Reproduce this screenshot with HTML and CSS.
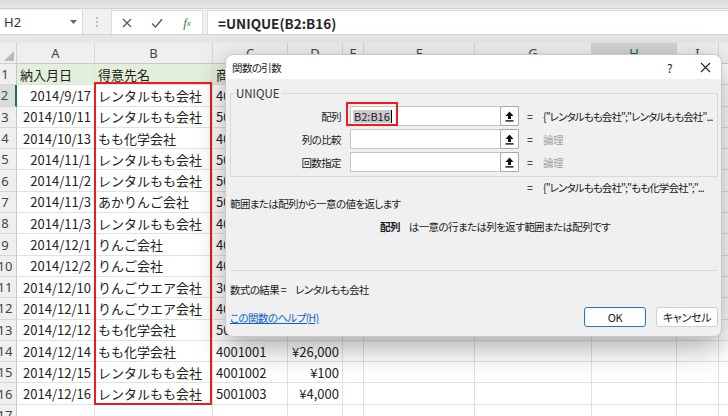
FILE: index.html
```html
<!DOCTYPE html>
<html lang="ja">
<head>
<meta charset="utf-8">
<link rel="stylesheet" href="styles.css">
</head>
<body>
<div class="app">
  <div class="topstrip"></div>
  <div class="fbar">
    <div class="namebox"><span>H2</span><svg class="dd" width="7" height="4" viewBox="0 0 7 4"><path d="M0 0h7L3.5 4z" fill="#666"/></svg></div>
    <div class="dots"><i></i><i></i><i></i></div>
    <div class="fxbox">
      <span class="fxi"><svg width="10" height="10" viewBox="0 0 10 10"><path d="M1 1L9 9M9 1L1 9" stroke="#5a5a5a" stroke-width="1.3" fill="none"/></svg></span>
      <span class="fxi"><svg width="12" height="10" viewBox="0 0 12 10"><path d="M1 5.5L4.5 9L11 1.2" stroke="#5a5a5a" stroke-width="1.4" fill="none"/></svg></span>
      <span class="fxi fx">f<small>x</small></span>
    </div>
    <div class="finput">=UNIQUE(B2:B16)</div>
  </div>
  <div class="band"></div>

  <div class="sheet">
    <div class="corner"><span class="tri"></span></div>
    <div class="ch">A</div><div class="ch">B</div><div class="ch">C</div><div class="ch">D</div><div class="ch">E</div><div class="ch">F</div><div class="ch">G</div><div class="ch sel">H</div><div class="ch">I</div><div class="ch">J</div>

    <div class="rh">1</div><div class="c g">納入月日</div><div class="c g">得意先名</div><div class="c g">商品コード</div><div class="c g">金額</div><div class="c g"></div><div class="c"></div><div class="c"></div><div class="c"></div><div class="c"></div><div class="c"></div>

    <div class="rh rsel">2</div><div class="c r">2014/9/17</div><div class="c">レンタルもも会社</div><div class="c">4001001</div><div class="c r">¥26,000</div><div class="c"></div><div class="c"></div><div class="c"></div><div class="c"></div><div class="c"></div><div class="c"></div>

    <div class="rh">3</div><div class="c r">2014/10/11</div><div class="c">レンタルもも会社</div><div class="c">5001003</div><div class="c r">¥4,000</div><div class="c"></div><div class="c"></div><div class="c"></div><div class="c"></div><div class="c"></div><div class="c"></div>

    <div class="rh">4</div><div class="c r">2014/10/13</div><div class="c">もも化学会社</div><div class="c">4001002</div><div class="c r">¥100</div><div class="c"></div><div class="c"></div><div class="c"></div><div class="c"></div><div class="c"></div><div class="c"></div>

    <div class="rh">5</div><div class="c r">2014/11/1</div><div class="c">レンタルもも会社</div><div class="c">5001001</div><div class="c r">¥3,000</div><div class="c"></div><div class="c"></div><div class="c"></div><div class="c"></div><div class="c"></div><div class="c"></div>

    <div class="rh">6</div><div class="c r">2014/11/2</div><div class="c">レンタルもも会社</div><div class="c">5001002</div><div class="c r">¥1,500</div><div class="c"></div><div class="c"></div><div class="c"></div><div class="c"></div><div class="c"></div><div class="c"></div>

    <div class="rh">7</div><div class="c r">2014/11/3</div><div class="c">あかりんご会社</div><div class="c">5001003</div><div class="c r">¥4,000</div><div class="c"></div><div class="c"></div><div class="c"></div><div class="c"></div><div class="c"></div><div class="c"></div>

    <div class="rh">8</div><div class="c r">2014/11/3</div><div class="c">レンタルもも会社</div><div class="c">4001001</div><div class="c r">¥26,000</div><div class="c"></div><div class="c"></div><div class="c"></div><div class="c"></div><div class="c"></div><div class="c"></div>

    <div class="rh">9</div><div class="c r">2014/12/1</div><div class="c">りんご会社</div><div class="c">4001003</div><div class="c r">¥2,000</div><div class="c"></div><div class="c"></div><div class="c"></div><div class="c"></div><div class="c"></div><div class="c"></div>

    <div class="rh">10</div><div class="c r">2014/12/2</div><div class="c">りんご会社</div><div class="c">4001002</div><div class="c r">¥100</div><div class="c"></div><div class="c"></div><div class="c"></div><div class="c"></div><div class="c"></div><div class="c"></div>

    <div class="rh">11</div><div class="c r">2014/12/10</div><div class="c">りんごウエア会社</div><div class="c">3001001</div><div class="c r">¥800</div><div class="c"></div><div class="c"></div><div class="c"></div><div class="c"></div><div class="c"></div><div class="c"></div>

    <div class="rh">12</div><div class="c r">2014/12/11</div><div class="c">りんごウエア会社</div><div class="c">4001002</div><div class="c r">¥100</div><div class="c"></div><div class="c"></div><div class="c"></div><div class="c"></div><div class="c"></div><div class="c"></div>

    <div class="rh">13</div><div class="c r">2014/12/12</div><div class="c">もも化学会社</div><div class="c">5001002</div><div class="c r">¥1,500</div><div class="c"></div><div class="c"></div><div class="c"></div><div class="c"></div><div class="c"></div><div class="c"></div>

    <div class="rh">14</div><div class="c r">2014/12/14</div><div class="c">もも化学会社</div><div class="c">4001001</div><div class="c r">¥26,000</div><div class="c"></div><div class="c"></div><div class="c"></div><div class="c"></div><div class="c"></div><div class="c"></div>

    <div class="rh">15</div><div class="c r">2014/12/15</div><div class="c">レンタルもも会社</div><div class="c">4001002</div><div class="c r">¥100</div><div class="c"></div><div class="c"></div><div class="c"></div><div class="c"></div><div class="c"></div><div class="c"></div>

    <div class="rh">16</div><div class="c r">2014/12/16</div><div class="c">レンタルもも会社</div><div class="c">5001003</div><div class="c r">¥4,000</div><div class="c"></div><div class="c"></div><div class="c"></div><div class="c"></div><div class="c"></div><div class="c"></div>

    <div class="rh">17</div><div class="c"></div><div class="c"></div><div class="c"></div><div class="c"></div><div class="c"></div><div class="c"></div><div class="c"></div><div class="c"></div><div class="c"></div><div class="c"></div>
  </div>

  <div class="redbox"></div>

  <div class="dialog">
    <div class="dtitle">
      <span>関数の引数</span>
      <div class="dctrl">
        <span class="q">?</span>
        <svg width="11" height="11" viewBox="0 0 11 11"><path d="M1 1L10 10M10 1L1 10" stroke="#222" stroke-width="1.1" fill="none"/></svg>
      </div>
    </div>
    <div class="dbody">
      <fieldset class="group">
        <legend>UNIQUE</legend>
        <div class="arg">
          <label>配列</label>
          <div class="inp"><span class="selt">B2:B16</span><span class="caret"></span><span class="pick"><svg width="9" height="11" viewBox="0 0 9 11"><path d="M4.5 0.5L8.5 5H6V8H3V5H0.5Z" fill="#111"/><rect x="0.5" y="9.2" width="8" height="1.4" fill="#111"/></svg></span></div>
          <span class="eq">=</span>
          <span class="val">{"レンタルもも会社";"レンタルもも会社"...</span>
        </div>
        <div class="arg">
          <label>列の比較</label>
          <div class="inp"><span class="pick"><svg width="9" height="11" viewBox="0 0 9 11"><path d="M4.5 0.5L8.5 5H6V8H3V5H0.5Z" fill="#111"/><rect x="0.5" y="9.2" width="8" height="1.4" fill="#111"/></svg></span></div>
          <span class="eq">=</span>
          <span class="val muted">論理</span>
        </div>
        <div class="arg">
          <label>回数指定</label>
          <div class="inp"><span class="pick"><svg width="9" height="11" viewBox="0 0 9 11"><path d="M4.5 0.5L8.5 5H6V8H3V5H0.5Z" fill="#111"/><rect x="0.5" y="9.2" width="8" height="1.4" fill="#111"/></svg></span></div>
          <span class="eq">=</span>
          <span class="val muted">論理</span>
        </div>
      </fieldset>
      <div class="arg total">
        <span></span><span></span>
        <span class="eq">=</span>
        <span class="val">{"レンタルもも会社";"もも化学会社";"...</span>
      </div>
      <p class="desc">範囲または配列から一意の値を返します</p>
      <p class="argdesc"><b>配列</b><span>は一意の行または列を返す範囲または配列です</span></p>
      <div class="sep"></div>
      <p class="result"><span>数式の結果 =</span><span>レンタルもも会社</span></p>
      <div class="dfoot">
        <a class="help">この関数のヘルプ(H)</a>
        <div class="btns"><button class="ok">OK</button><button class="cancel">キャンセル</button></div>
      </div>
    </div>
    <div class="hilite"></div>
  </div>
</div>
</body>
</html>
```

FILE: styles.css
```css
* { box-sizing: border-box; }
html, body { margin: 0; padding: 0; }
body {
  width: 728px; height: 416px; overflow: hidden; background: #fff;
  font-family: "Noto Sans CJK JP", "Noto Sans", sans-serif;
}
.app { position: relative; width: 728px; height: 416px; overflow: hidden; }

.topstrip { height: 9px; background: linear-gradient(#dadada, #e7e7e7); border-bottom: 1px solid #d2d2d2; }
.fbar { height: 26px; display: flex; padding-top: 1px; background: #f1f1f1; border-bottom: 1px solid #d4d4d4; }
.namebox {
  width: 83px; background: #fff; display: flex; align-items: center; justify-content: space-between;
  padding: 0 5px 0 4px; font-family: "Noto Sans", sans-serif; font-size: 13px; color: #333;
  border-right: 1px solid #dcdcdc;
}
.dots { width: 28px; display: flex; flex-direction: column; align-items: center; justify-content: center; gap: 2px; }
.dots i { width: 2px; height: 2px; background: #ababab; border-radius: 50%; }
.fxbox { width: 92px; background: #fff; border: 1px solid #dcdcdc; border-bottom: 0; display: flex; align-items: center; }
.fxi { width: 30px; display: flex; justify-content: center; align-items: center; }
.fx { font-family: "Liberation Serif", serif; font-style: italic; color: #3d7a45; font-size: 13px; }
.fx small { font-size: 9px; }
.finput {
  margin-left: 4px; flex: 1; background: #fff; border-left: 1px solid #dcdcdc; border-top: 1px solid #dcdcdc;
  padding-left: 10px; font-size: 13.5px; font-weight: 600; color: #262626; display: flex; align-items: center;
}
.band { height: 8px; background: #e6e6e6; }

.sheet {
  display: grid; margin-left: -6px; width: 790px;
  grid-template-columns: 23px 78px 118px 75px 55px 21px 111px 117px 85px 42px 60px;
  grid-template-rows: 21px repeat(17, 21.31px);
}
.corner, .ch, .rh { background: #efefef; color: #444; font-family: "Noto Sans", sans-serif; font-size: 13px; }
.corner { border-right: 1px solid #cfcfcf; border-bottom: 1px solid #cfcfcf; display: flex; justify-content: flex-end; align-items: flex-end; padding: 0 2px 2px 0; }
.tri { width: 10px; height: 10px; background: #b9b9b9; clip-path: polygon(100% 0, 100% 100%, 0 100%); }
.ch { display: flex; align-items: center; justify-content: center; border-right: 1px solid #d6d6d6; border-bottom: 1px solid #c8c8c8; }
.ch.sel { background: #d4d4d4; color: #0f6b37; border-bottom: 2px solid #107c41; }
.rh { display: flex; align-items: center; justify-content: center; border-right: 1px solid #c8c8c8; border-bottom: 1px solid #d6d6d6; }
.rh.rsel { background: #dcdcdc; color: #0f6b37; border-right: 2px solid #107c41; }
.c {
  display: flex; align-items: center; padding: 0 3px; white-space: nowrap; overflow: hidden;
  border-right: 1px solid #e1e1e1; border-bottom: 1px solid #e1e1e1;
  font-size: 13px; color: #222;
}
.c.r { justify-content: flex-end; }
.c.g { background: #e2efda; }

.redbox { position: absolute; left: 94px; top: 82px; width: 118px; height: 323px; border: 2px solid #ee1c1c; }

.dialog {
  position: absolute; left: 225px; top: 54px; width: 497px; height: 283px;
  background: #f0f0f0; border: 1px solid #c9c9c9; border-radius: 8px;
  box-shadow: 0 10px 30px rgba(0,0,0,0.34);
  font-size: 10.5px; letter-spacing: -0.6px; color: #1a1a1a; font-feature-settings: "palt";
}
.dtitle { height: 24px; background: #fff; border-radius: 8px 8px 0 0; display: flex; align-items: center; justify-content: space-between; padding: 0 10px 0 6px; }
.dctrl { display: flex; align-items: center; gap: 28px; }
.q { font-size: 12px; color: #222; }
.dbody { padding: 0 3px 0 4px; }
.group { margin: 7px 0 0; padding: 6px 0 4px; border: 1px solid #d9d9d9; }
.group legend { padding: 0 2px; margin-left: 3px; font-size: 11.5px; letter-spacing: 0; line-height: 14px; color: #333; }
.arg { display: grid; grid-template-columns: 119px 169px 24px 1fr; height: 20px; align-items: center; margin-bottom: 3px; }
.arg:last-child { margin-bottom: 0; }
.arg label { text-align: right; padding-right: 9px; }
.inp { height: 20px; background: #fff; border: 1px solid #c6c6c6; display: flex; align-items: center; padding-left: 2px; letter-spacing: 0; font-size: 11px; }
.selt { background: #c9c9c9; padding: 0 1px; line-height: 13px; }
.caret { width: 1px; height: 13px; background: #000; }
.pick { margin-left: auto; width: 19px; height: 20px; margin-right: -1px; border: 1px solid #aaa; border-radius: 2px; background: #fdfdfd; display: flex; align-items: center; justify-content: center; }
.eq { padding-left: 8px; }
.val { white-space: nowrap; overflow: hidden; letter-spacing: -0.9px; }
.muted { color: #a3a3a3; letter-spacing: -0.6px; }
.arg.total { margin: 1px 0 0; height: 18px; grid-template-columns: 120px 169px 24px 1fr; }
.desc { margin: 0; line-height: 16px; padding-left: 0; }
.argdesc { margin: 7px 0 0; line-height: 16px; padding-left: 150px; display: flex; gap: 9px; }
.argdesc b { font-weight: 600; }
.sep { margin: 35px 0 0 1px; border-top: 1px solid #dadada; }
.result { margin: 11px 0 0; line-height: 16px; display: flex; gap: 9px; }
.dfoot { margin-top: 9px; display: flex; justify-content: space-between; align-items: center; }
.help { color: #0a64c8; text-decoration: underline; }
.btns { display: flex; gap: 10px; }
.btns button {
  width: 62px; height: 20px; font-family: "Noto Sans CJK JP", sans-serif; font-size: 11px; color: #1a1a1a; letter-spacing: -0.3px;
  background: #fdfdfd; border: 1px solid #d0d0d0; border-radius: 3px; padding: 0; font-feature-settings: "palt";
}
.btns .ok { border: 1px solid #2b73c6; background: #fdfdfd; }
.hilite { position: absolute; left: 120px; top: 47px; width: 52px; height: 24px; border: 2px solid #ee1c1c; }
```
